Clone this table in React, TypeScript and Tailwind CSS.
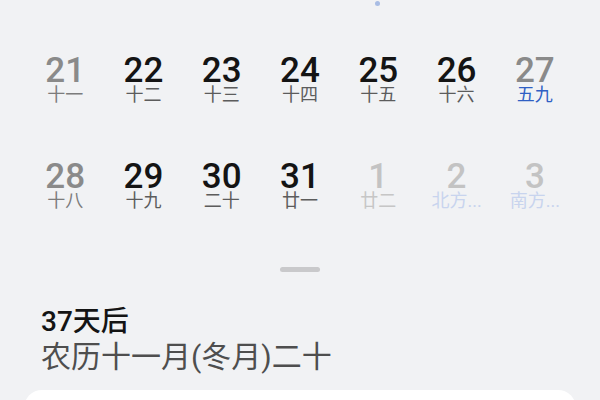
const FONT = "font-['Roboto','Noto_Sans_CJK_SC',sans-serif]";

type Day = { n: number; sub: string; tone: "weekday" | "weekend" | "term" | "next" | "nextTerm" };

const rows: Day[][] = [
  [
    { n: 21, sub: "十一", tone: "weekend" },
    { n: 22, sub: "十二", tone: "weekday" },
    { n: 23, sub: "十三", tone: "weekday" },
    { n: 24, sub: "十四", tone: "weekday" },
    { n: 25, sub: "十五", tone: "weekday" },
    { n: 26, sub: "十六", tone: "weekday" },
    { n: 27, sub: "五九", tone: "term" },
  ],
  [
    { n: 28, sub: "十八", tone: "weekend" },
    { n: 29, sub: "十九", tone: "weekday" },
    { n: 30, sub: "二十", tone: "weekday" },
    { n: 31, sub: "廿一", tone: "weekday" },
    { n: 1, sub: "廿二", tone: "next" },
    { n: 2, sub: "北方...", tone: "nextTerm" },
    { n: 3, sub: "南方...", tone: "nextTerm" },
  ],
];

const numColor: Record<Day["tone"], string> = {
  weekday: "text-[#141414]",
  weekend: "text-[#8a8a8a]",
  term: "text-[#8a8a8a]",
  next: "text-[#c3c3c3]",
  nextTerm: "text-[#c3c3c3]",
};

const subColor: Record<Day["tone"], string> = {
  weekday: "text-[#5c5c5c]",
  weekend: "text-[#7c7c7c]",
  term: "text-[#2f5fc4]",
  next: "text-[#c6c6c6]",
  nextTerm: "text-[#c8d4ee]",
};

function DayCell({ day }: { day: Day }) {
  return (
    <div className="flex flex-col items-center">
      <span className={`text-[35px] font-medium leading-[26px] ${numColor[day.tone]}`}>
        {day.n}
      </span>
      <span className={`mt-[2px] text-[18px] leading-[18px] whitespace-nowrap ${subColor[day.tone]}`}>
        {day.sub}
      </span>
    </div>
  );
}

export default function App() {
  return (
    <div className={`flex h-[400px] w-[600px] flex-col overflow-hidden bg-[#f1f2f4] ${FONT}`}>
      <div className="pl-[375px] pt-[1px]">
        <div className="h-[5px] w-[5px] rounded-full bg-[#a9bde4]" />
      </div>

      <div className="mt-[52px] flex flex-col gap-[60px] px-[26px]">
        {rows.map((row, i) => (
          <div key={i} className="grid grid-cols-7">
            {row.map((d) => (
              <DayCell key={d.n} day={d} />
            ))}
          </div>
        ))}
      </div>

      <div className="mt-[57px] flex justify-center">
        <div className="h-[5px] w-[40px] rounded-full bg-[#c9c9cb]" />
      </div>

      <div className="mt-[33px] px-[41px]">
        <div className="text-[28px] font-medium leading-[34px] text-[#141414]">37天后</div>
        <div className="text-[30px] leading-[36px] text-[#4e4e4e]">农历十一月(冬月)二十</div>
      </div>

      <div className="mx-[24px] mt-[15px] h-[60px] shrink-0 rounded-[18px] bg-white" />
    </div>
  );
}
